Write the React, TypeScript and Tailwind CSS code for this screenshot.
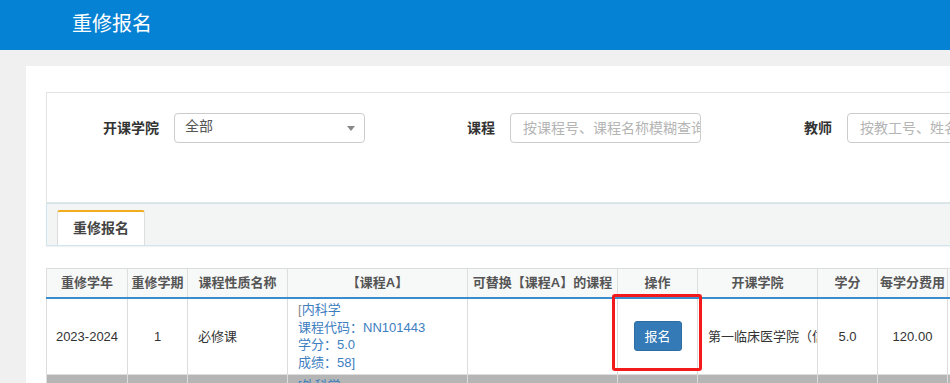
const font = { fontFamily: '"Liberation Sans", "Noto Sans CJK SC", sans-serif' };

const columns = [
  { title: '重修学年', w: 81 },
  { title: '重修学期', w: 60 },
  { title: '课程性质名称', w: 100 },
  { title: '【课程A】', w: 180 },
  { title: '可替换【课程A】的课程', w: 150 },
  { title: '操作', w: 80 },
  { title: '开课学院', w: 120 },
  { title: '学分', w: 60 },
  { title: '每学分费用', w: 70 },
  { title: '状态', w: 80 },
];

const tableWidth = columns.reduce((sum, c) => sum + c.w, 0);

function FilterBar() {
  return (
    <div className="flex h-[111px] border border-[#e3e3e3] pt-[20px]">
      <div className="flex h-[30px] items-center">
        <label className="w-[127px] pr-[15px] text-right text-[14px] font-bold text-[#333]">开课学院</label>
        <div className="flex h-[30px] w-[191px] items-center justify-between rounded-[4px] border border-[#ccc] pl-[10px] pr-[9px] text-[14px] text-[#555]">
          <span className="-mt-[3px]">全部</span>
          <svg width="8" height="5" viewBox="0 0 8 5" className="mt-[1px]">
            <path d="M0 0h8L4 5z" fill="#888" />
          </svg>
        </div>
      </div>
      <div className="flex h-[30px] items-center">
        <label className="w-[145px] pr-[15px] text-right text-[14px] font-bold text-[#333]">课程</label>
        <div className="flex h-[30px] w-[191px] items-center overflow-hidden whitespace-nowrap rounded-[4px] border border-[#ccc] pl-[12px] text-[14px] text-[#b5b5b5]">
          按课程号、课程名称模糊查询
        </div>
      </div>
      <div className="flex h-[30px] items-center">
        <label className="w-[146px] pr-[15px] text-right text-[14px] font-bold text-[#333]">教师</label>
        <div className="flex h-[30px] w-[191px] shrink-0 items-center overflow-hidden whitespace-nowrap rounded-[4px] border border-[#ccc] pl-[12px] text-[14px] text-[#b5b5b5]">
          按教工号、姓名模糊查询
        </div>
      </div>
    </div>
  );
}

function TabBar() {
  return (
    <div className="flex h-[43px] items-end border border-[#cfe6ee] bg-[#f3f4f4] pl-[10px] shadow-[0_1px_1px_rgba(0,0,0,0.05)]">
      <div className="flex h-[35px] w-[88px] items-center justify-center rounded-t-[3px] border-x border-t-2 border-x-[#ddd] border-t-[#f0ad1e] bg-white text-[14px] font-bold text-[#444]">
        重修报名
      </div>
    </div>
  );
}

function RetakeTable() {
  return (
    <table className="table-fixed border-collapse text-[13px]" style={{ width: tableWidth }}>
      <colgroup>
        {columns.map((c) => (
          <col key={c.title} style={{ width: c.w }} />
        ))}
      </colgroup>
      <thead>
        <tr className="h-[29px] bg-[#f7f8f8]">
          {columns.map((c) => (
            <th
              key={c.title}
              className="whitespace-nowrap border border-b-2 border-[#ddd] border-b-[#3c8dce] px-0 text-center font-bold text-[#555]"
            >
              {c.title}
            </th>
          ))}
        </tr>
      </thead>
      <tbody>
        <tr className="h-[77px] bg-white text-[#333]">
          <td className="border border-[#ddd] text-center">2023-2024</td>
          <td className="border border-[#ddd] text-center">1</td>
          <td className="border border-[#ddd] pl-[10px]">必修课</td>
          <td className="border border-[#ddd] pl-[10px] leading-[17.5px] text-[#3d7ebf]">
            <span className="text-[#8a8a8a]">[</span>内科学
            <br />
            课程代码：NN101443
            <br />
            学分：5.0
            <br />
            成绩：58]
          </td>
          <td className="border border-[#ddd]" />
          <td className="relative border border-[#ddd] text-center">
            <button className="h-[30px] w-[48px] rounded-[3px] border border-[#2e6da4] bg-[#337ab7] text-[13px] text-white">
              报名
            </button>
            <div className="pointer-events-none absolute -top-[5px] -left-[6px] h-[77px] w-[90px] rounded-[3px] border-[3px] border-[#f21a1a]" />
          </td>
          <td className="overflow-hidden whitespace-nowrap border border-[#ddd] pl-[10px]">第一临床医学院（信息）</td>
          <td className="border border-[#ddd] text-center">5.0</td>
          <td className="border border-[#ddd] text-center">120.00</td>
          <td className="border border-[#ddd]" />
        </tr>
        <tr className="h-[77px] bg-[#b5b5b5] align-top text-[#333]">
          <td className="border border-[#ddd]" />
          <td className="border border-[#ddd]" />
          <td className="border border-[#ddd]" />
          <td className="border border-[#ddd] pl-[10px] pt-[2px] leading-[17.5px] text-[#3d7ebf]">[外科学</td>
          <td className="border border-[#ddd]" />
          <td className="border border-[#ddd]" />
          <td className="border border-[#ddd]" />
          <td className="border border-[#ddd]" />
          <td className="border border-[#ddd]" />
          <td className="border border-[#ddd]" />
        </tr>
      </tbody>
    </table>
  );
}

export default function App() {
  return (
    <div className="h-[383px] w-[950px] overflow-hidden bg-[#f0f0f0]" style={font}>
      <header className="flex h-[50px] items-center bg-[#0582d4] pl-[72px]">
        <h1 className="-mt-[2px] text-[20px] font-normal text-white">重修报名</h1>
      </header>
      <div className="pl-[26px] pt-[16px]">
        <div className="h-[400px] overflow-hidden bg-white pl-[20px] pt-[26px]">
          <div className="w-[1000px]">
            <FilterBar />
            <TabBar />
            <div className="mt-[22px]">
              <RetakeTable />
            </div>
          </div>
        </div>
      </div>
    </div>
  );
}
